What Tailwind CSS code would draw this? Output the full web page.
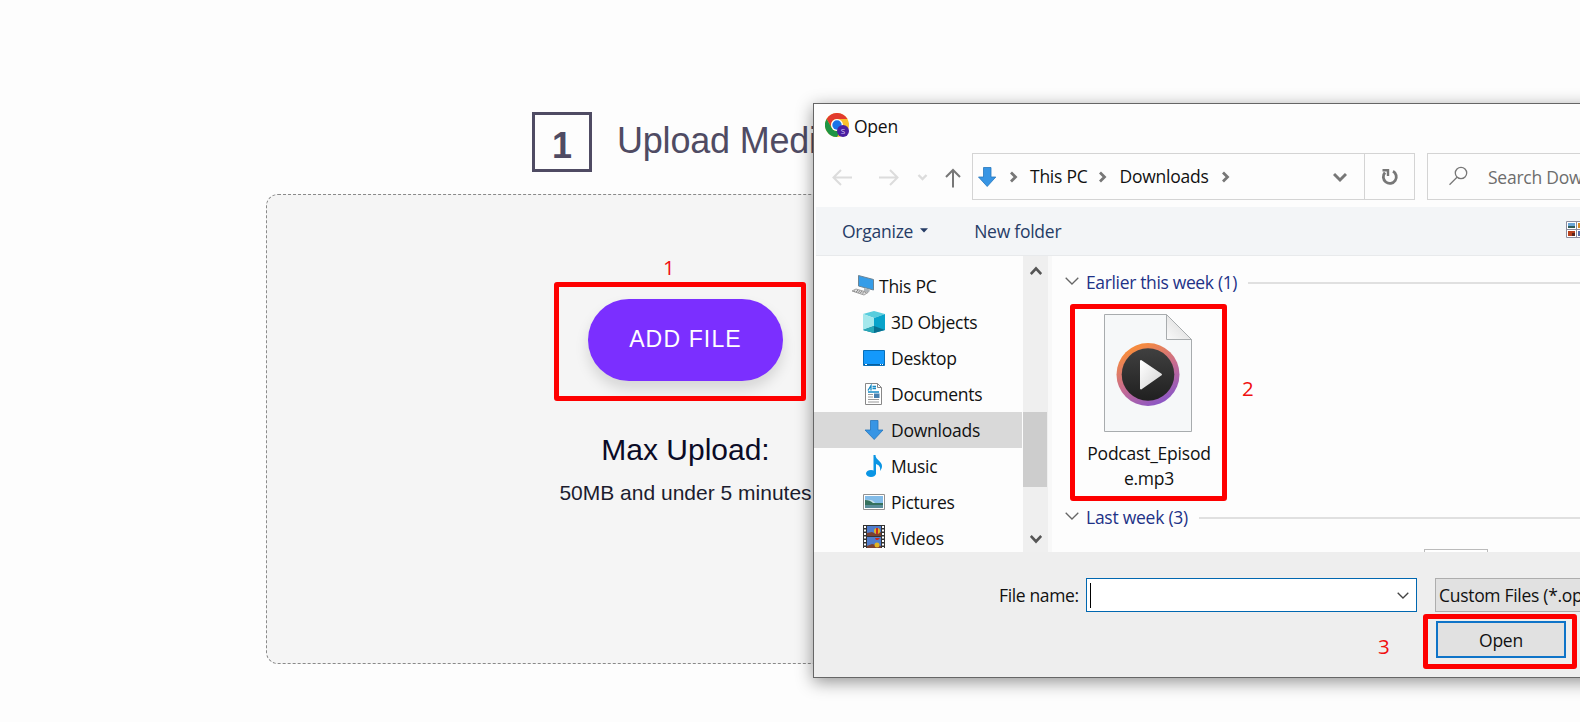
<!DOCTYPE html>
<html lang="en">
<head>
<meta charset="UTF-8" />
<meta name="viewport" content="width=device-width, initial-scale=1.0" />
<title>Upload Media</title>
<script src="https://cdn.jsdelivr.net/npm/@tailwindcss/browser@4"></script>
</head>
<body class="relative w-[1580px] h-[722px] overflow-hidden bg-[#fdfdfd] font-['Liberation_Sans',Arial,sans-serif]">

<!-- upload page -->
<main class="w-[839px] ml-[266px] pt-28">
    <div class="flex items-center h-[60px] pl-[266px] text-[#4f4b63]">
    <div class="w-[60px] h-[60px] border-3 border-[#4f4b63] flex items-center justify-center text-4xl font-bold pt-2">1</div>
    <h2 class="ml-[25px] text-[36px] leading-none tracking-[-0.2px] whitespace-nowrap pb-[3px]">Upload Media</h2>
    </div>
    <div class="mt-[22px] h-[470px] rounded-xl border border-dashed border-[#8a8a8a] bg-[#f5f5f5] flex flex-col items-center pt-26">
    <button class="w-[195px] h-[82px] rounded-full bg-[#7b2fff] text-white text-[23px] tracking-[1.15px] pb-0.5 shadow-[0_8px_14px_rgba(0,0,0,0.13)]">ADD FILE</button>
    <h3 class="mt-[51px] text-[30px] leading-9 text-[#0b0b26]">Max Upload:</h3>
    <p class="mt-[11px] text-[21px] leading-7 text-[#1c1c2e] whitespace-nowrap">50MB and under 5 minutes</p>
    </div>
</main>

<!-- file dialog -->
<div class="absolute left-[813px] top-[103px] w-[797px] pr-[30px] h-[575px] border border-r-0 border-[#666] bg-[#fdfdfd] shadow-[0_4px_16px_rgba(0,0,0,0.42)] flex flex-col font-['Open_Sans','Noto_Sans',sans-serif] text-[17.5px] tracking-[-0.25px] text-[#111]">
    <div class="h-[49px] flex items-center pl-[11px] pb-2.5">
    <svg class="w-6 h-6 mt-0.5" viewBox="0 0 24 24">
        <circle cx="12" cy="12" r="12" fill="#fbc02d"/>
        <path d="M1.6 6A12 12 0 0 1 22.4 6H12a6 6 0 0 0-5.2 9z" fill="#e23b2e"/>
        <path d="M1.6 6A12 12 0 0 0 12 24l5.2-9A6 6 0 0 1 6.8 15z" fill="#1e9444"/>
        <circle cx="12" cy="12" r="6" fill="#fff"/>
        <circle cx="12" cy="12" r="4.7" fill="#1a73e8"/>
        <circle cx="18" cy="18" r="6" fill="#4a1fa0"/>
        <text x="18" y="20.8" font-size="8" text-anchor="middle" fill="#d9c8f5" letter-spacing="0">S</text>
    </svg>
    <span class="ml-[5px] mt-1.5">Open</span>
    </div>

    <div class="h-[54px] flex items-start">
    <svg class="w-[158px] h-[46px] shrink-0" viewBox="0 0 158 46" fill="none" stroke="#dcdcdc" stroke-width="2">
        <path d="M38 24.500H20M27 17l-7.500 7.500L27 32M65 24.500h18M76 17l7.500 7.500L76 32"/>
        <path d="M104.500 22l4 4 4-4" stroke-width="2.400"/>
        <path d="M139 34.500V17M132 24l7-7 7 7" stroke="#777"/>
    </svg>
    <div class="w-[443px] h-[47px] border border-[#d4d4d4] flex items-center shrink-0">
        <svg class="w-5 h-5 ml-1" viewBox="0 0 20 20"><path d="M6.500.5h7.500v9.500h4.800L10.200 19.500 1.500 10h5z" fill="#3795e4" stroke="#2476bd" stroke-width=".8"/></svg>
        <svg class="w-2 h-3 ml-[13px]" viewBox="0 0 8 12" fill="none" stroke="#777" stroke-width="2.800"><path d="M1 1.500L5.500 6 1 10.500"/></svg>
        <span class="ml-[12px]">This PC</span>
        <svg class="w-2 h-3 ml-[12px]" viewBox="0 0 8 12" fill="none" stroke="#777" stroke-width="2.800"><path d="M1 1.500L5.500 6 1 10.500"/></svg>
        <span class="ml-[12px]">Downloads</span>
        <svg class="w-2 h-3 ml-[14px]" viewBox="0 0 8 12" fill="none" stroke="#777" stroke-width="2.800"><path d="M1 1.500L5.500 6 1 10.500"/></svg>
        <svg class="w-[14px] h-3 ml-auto" viewBox="0 0 14 12" fill="none" stroke="#777" stroke-width="3"><path d="M1 3l6 6 6-6"/></svg>
        <div class="ml-[17px] w-[50px] h-full border-l border-[#d4d4d4] flex items-center justify-center">
        <svg class="w-[18px] h-[18px]" viewBox="0 0 18 18" fill="none" stroke="#777" stroke-width="2.800"><path d="M12 3.200A6.500 6.500 0 1 1 4 4.500"/><path d="M1.500 2.300H7V8" stroke-width="2.400"/></svg>
        </div>
    </div>
    <div class="ml-3 flex-1 min-w-0 h-[47px] border border-r-0 border-[#d4d4d4] flex items-center text-[#6d6d6d]">
        <svg class="w-5 h-5 ml-5 -mt-px shrink-0" viewBox="0 0 20 20" fill="none" stroke="#777" stroke-width="1.300"><circle cx="13" cy="7" r="5.700"/><path d="M9 11.200L1.500 18.700"/></svg>
        <span class="ml-5 mt-0.5 whitespace-nowrap">Search Dow</span>
    </div>
    </div>

    <div class="ml-0.5 h-[49px] bg-[#f3f5f7] border-b border-[#e8eaec] flex items-center pl-[26px] text-[#263c66] shrink-0 overflow-hidden">
    <span>Organize</span>
    <svg class="w-2 h-[5px] ml-[7px] -mt-0.5" viewBox="0 0 8 5"><path d="M0 .3h8L4 4.500z" fill="#263c66"/></svg>
    <span class="ml-[46px] whitespace-nowrap">New folder</span>
    <svg class="w-[14px] h-[17px] ml-auto -mt-1 shrink-0" viewBox="0 0 14 17">
        <path d="M.5.500h20v16H.5zM10.500.5v16M.5 8.500h20" fill="#fff" stroke="#8c8c9c"/>
        <path d="M2 2h7v5H2z" fill="#6ba6d8"/><path d="M2 5h7v2H2z" fill="#2f5b58"/>
        <path d="M2 10h7v5H2z" fill="#b8401c"/><path d="M6 12h3v3H6z" fill="#5b241b"/>
        <path d="M12 2h7v5h-7z" fill="#d78a25"/><path d="M12 10h7v5h-7z" fill="#536aa8"/>
    </svg>
    </div>

    <div class="flex h-[296px] shrink-0 overflow-hidden">
    <ul class="w-[209px] pt-[12px] shrink-0 *:h-9 *:flex *:items-center *:pl-[49px] *:gap-1.5">
        <li class="!pl-[37px] !gap-1">
        <svg class="w-6 h-6" viewBox="0 0 24 24"><path d="M7.500 1.500l15 4v10.500L7.500 12z" fill="#369de8" stroke="#6c8494"/><path d="M13 14l6 1.500-1 3-5-1.500z" fill="#aeb5ba"/><path d="M1 17l4-2 12 3.500-4 2.500z" fill="#e4e4e4" stroke="#a0a0a0"/><path d="M3 17l10 2.500M6 16.500l9 2.300" stroke="#777" stroke-dasharray="1 1"/></svg>
        This PC
        </li>
        <li>
        <svg class="w-[22px] h-[22px]" viewBox="0 0 22 22"><path d="M0 3L11 0l11 3-11 4z" fill="#58cddd"/><path d="M0 3l11 4v15L0 19z" fill="#a4e8ec"/><path d="M22 3L11 7v15l11-3z" fill="#08a3ca"/><path d="M0 19l11-4 11 4-11 3z" fill="#08708f"/><path d="M0 19l11-4v7z" fill="#28a9b9"/></svg>
        3D Objects
        </li>
        <li>
        <svg class="w-[22px] h-4" viewBox="0 0 22 16"><path d="M.5.500h21v15H.5z" fill="#1499fb" stroke="#086fb8"/><path d="M1 14.500h20" stroke="#075f9e"/><path d="M2 14.500h2M17 14.500h1M19 14.500h1" stroke="#fff"/></svg>
        Desktop
        </li>
        <li>
        <svg class="w-[22px] h-[22px]" viewBox="0 0 22 22" fill="none"><path d="M2.500.500h12l4 4v17h-16z" fill="#fff" stroke="#888"/><path d="M14.500.500v4h4" stroke="#888"/><path d="M5 7.500l3-5v5M9.500 3.500H13M9.500 5.500H13M5 9h11" stroke="#168bc5" stroke-width="1.300"/><path d="M5 11.500h5M5 14h5M5 16.500h11M5 19h11" stroke="#999"/><path d="M11 10.500h5.500v4.500H11z" fill="#477fae"/></svg>
        Documents
        </li>
        <li class="bg-[#d9d9d9] w-[208px]">
        <svg class="w-[22px] h-5" viewBox="0 0 22 20"><path d="M7.500.500h7.500v9.500h5L11.200 19.500 2 10h5.500z" fill="#3795e4" stroke="#2476bd" stroke-width=".8"/></svg>
        Downloads
        </li>
        <li>
        <svg class="w-[22px] h-[22px]" viewBox="0 0 22 22"><ellipse cx="8" cy="18.500" rx="5" ry="3.500" fill="#0a95e4"/><path d="M10.500 0h2c0 5 6.500 6 6.500 11 0 2-.8 3.500-2 5 .8-4-1-6-4-7v10h-2.500z" fill="#0a95e4"/></svg>
        Music
        </li>
        <li>
        <svg class="w-[22px] h-4" viewBox="0 0 22 16"><path d="M.5.500h21v15H.5z" fill="#fff" stroke="#929292"/><path d="M2 2h18v12H2z" fill="#83bce8"/><path d="M2 6q7-1 9 2t9 1v2H2z" fill="#c7e0e9"/><path d="M2 6q5 0 8 3h10v2H2z" fill="#35715d"/><path d="M2 11h18v3H2z" fill="#598c98"/></svg>
        Pictures
        </li>
        <li>
        <svg class="w-[22px] h-[23px] -mt-1" viewBox="0 0 22 23"><path d="M0 0h22v23H0z" fill="#333"/><path d="M4 1h14v10H4zM4 12h14v11H4z" fill="#507dcc"/><path d="M2 1v22M20 1v22" stroke="#fff" stroke-width="2" stroke-dasharray="2 1.500"/><path d="M4 8l5-1 4 2 5-2v4H4zM4 21l5-2 9 2v2H4z" fill="#7b4130"/><circle cx="14" cy="6" r="3" fill="#e2b521"/><path d="M13 3h2v6h-2z" fill="#c82a20"/><circle cx="14" cy="20" r="2.500" fill="#e2b521"/><path d="M12 13h5l-2 2h-2z" fill="#c82a20"/></svg>
        Videos
        </li>
    </ul>

    <div class="w-[25px] bg-[#efefef] flex flex-col items-center shrink-0">
        <svg class="w-3 h-[10px] mt-2.5" viewBox="0 0 12 10" fill="none" stroke="#555" stroke-width="2.600"><path d="M.8 8L6 2.500 11.200 8"/></svg>
        <div class="w-6 h-[75px] mr-px mt-[136px] bg-[#cdcdcd]"></div>
        <svg class="w-3 h-[10px] mt-auto mb-2" viewBox="0 0 12 10" fill="none" stroke="#555" stroke-width="2.600"><path d="M.8 2L6 7.500 11.200 2"/></svg>
    </div>

    <div class="flex-1 border-l-4 border-[#f8f8f8] pl-[13px] pt-[15px] min-w-0">
        <div class="h-6 flex items-center text-[#1e3287]">
        <svg class="w-[14px] h-2 -mt-1" viewBox="0 0 14 8" fill="none" stroke="#666" stroke-width="1.300"><path d="M.7.7L7 7 13.300.7"/></svg>
        <span class="ml-[7px] pb-0.5 tracking-[-0.35px]">Earlier this week (1)</span>
        <span class="flex-1 ml-[11px] h-0.5 bg-[#e0e0e0]"></span>
        </div>
        <div class="w-[150px] h-[211px] ml-2 pt-[19px] flex flex-col items-center">
        <svg class="w-[88px] h-[118px] shrink-0" viewBox="0 0 88 118">
            <defs>
            <linearGradient id="ring" x1="0.200" y1="0" x2=".7" y2="1"><stop offset=".1" stop-color="#f68b3e"/><stop offset=".55" stop-color="#c66b91"/><stop offset="1" stop-color="#8755c9"/></linearGradient>
            <linearGradient id="disc" x1="0" y1="0" x2="0" y2="1"><stop stop-color="#404040"/><stop offset="1" stop-color="#202020"/></linearGradient>
            <linearGradient id="fold" x1="0" y1="1" x2="1" y2="0"><stop stop-color="#fafafa"/><stop offset="1" stop-color="#d4d4d4"/></linearGradient>
            <linearGradient id="tri" x1="0" y1="0" x2="1" y2="1"><stop stop-color="#fff"/><stop offset="1" stop-color="#d4d4d4"/></linearGradient>
            </defs>
            <path d="M.5.500h62l25 25v92H.5z" fill="#f6f8f9" stroke="#a8acae"/>
            <path d="M62.500.500v25h25z" fill="url(#fold)" stroke="#a8acae"/>
            <circle cx="44" cy="60.500" r="31.500" fill="url(#ring)"/>
            <circle cx="44" cy="60.500" r="26.300" fill="url(#disc)"/>
            <path d="M37 47l20 13.500L37 74.500z" fill="url(#tri)" stroke="url(#tri)" stroke-width="2" stroke-linejoin="round"/>
        </svg>
        <p class="mt-[9px] ml-0.5 text-center leading-[25px] w-[130px] tracking-[-0.22px]">Podcast_Episod<br>e.mp3</p>
        </div>
        <div class="h-6 flex items-center text-[#1e3287]">
        <svg class="w-[14px] h-2 -mt-1" viewBox="0 0 14 8" fill="none" stroke="#666" stroke-width="1.300"><path d="M.7.7L7 7 13.300.7"/></svg>
        <span class="ml-[7px] pb-0.5">Last week (3)</span>
        <span class="flex-1 ml-[11px] h-0.5 bg-[#e0e0e0]"></span>
        </div>
        <div class="ml-[359px] mt-[19px] w-16 h-20 border border-[#bbb] bg-white"></div>
    </div>
    </div>

    <div class="flex-1 bg-[#eee] pt-[26px]">
    <div class="flex items-center pl-[185px]">
        <label class="w-[87px] whitespace-nowrap tracking-[-0.35px]">File name:</label>
        <div class="w-[331px] h-[34px] border border-[#0067b0] bg-white flex items-center justify-between pl-[3px] pr-[7px] shrink-0">
        <span class="w-px h-[25px] bg-black"></span>
        <svg class="w-3 h-[7px]" viewBox="0 0 12 7" fill="none" stroke="#444" stroke-width="1.300"><path d="M.7.7L6 6 11.300.7"/></svg>
        </div>
        <div class="ml-[18px] flex-1 min-w-0 h-[34px] border border-r-0 border-[#adadad] bg-[#e1e1e1] flex items-center pl-[3px] whitespace-nowrap tracking-[-0.3px]">Custom Files (*.op</div>
    </div>
    <button class="block ml-[622px] mt-[9px] w-[130px] h-[37px] pt-0.5 border-2 border-[#0f74c8] bg-[#e1e1e1]">Open</button>
    </div>
</div>

<!-- step markers -->
<div class="font-['Open_Sans','Noto_Sans',sans-serif] text-[20.5px] leading-5 text-[#f01010]">
    <div class="absolute left-[554px] top-[282px] w-[252px] h-[119px] border-5 border-[#fe0000] rounded-[3px]"></div>
    <span class="absolute left-[663px] top-[257px]">1</span>
    <div class="absolute left-[1070px] top-[304px] w-[157px] h-[197px] border-5 border-[#fe0000] rounded-[3px]"></div>
    <span class="absolute left-[1242px] top-[378px]">2</span>
    <div class="absolute left-[1423px] top-[614px] w-[154px] h-[55px] border-5 border-[#fe0000] rounded-[3px]"></div>
    <span class="absolute left-[1378px] top-[636px]">3</span>
</div>
</body>
</html>
